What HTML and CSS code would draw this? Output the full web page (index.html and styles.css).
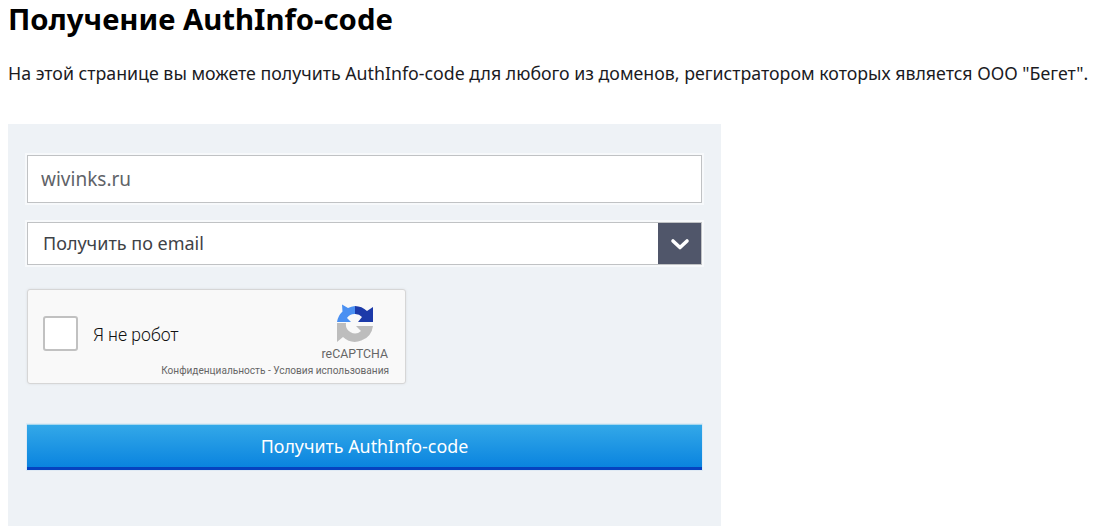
FILE: index.html
```html
<!DOCTYPE html>
<html lang="ru">
<head>
    <meta charset="UTF-8">
    <meta name="viewport" content="width=device-width, initial-scale=1.0">
    <title>Получение AuthInfo-code</title>
    <link rel="stylesheet" href="styles.css">
</head>
<body>

<h1>Получение AuthInfo-code</h1>
<p class="lead">На этой странице вы можете получить AuthInfo-code для любого из доменов, регистратором которых является ООО "Бегет".</p>

<form class="panel">
    <input class="field" type="text" value="wivinks.ru">

    <div class="select">
        <span class="select-text">Получить по email</span>
        <span class="select-arrow">
            <svg width="20" height="14" viewBox="0 0 20 14">
                <path d="M3 4 L10 10.5 L17 4" fill="none" stroke="#fff" stroke-width="3.6" stroke-linecap="round" stroke-linejoin="round"/>
            </svg>
        </span>
    </div>

    <!-- Капча -->
    <div class="captcha">
        <div class="captcha-main">
            <span class="captcha-box"></span>
            <span class="captcha-label">Я не робот</span>
        </div>
        <div class="captcha-brand">
            <svg width="38" height="39" viewBox="0 0 38 39">
                <path d="M1 18 A18 18 0 0 1 6.5 7.5 L6 0.5 L12 4 A18 18 0 0 1 19 2 L19 10 A9 9 0 0 0 11 14 L15 18 Z" fill="#4a90f2"/>
                <path d="M19 2 A18 18 0 0 1 31 7 L37 3 L37 18 L22 18 L26 13 A9 9 0 0 0 19 10 Z" fill="#1c3aa9"/>
                <path d="M1 19 L10 19 A9 9 0 0 0 25 27 L20 22 L37 22 A18 18 0 0 1 7 33 L1 38 Z" fill="#bdbdbd"/>
            </svg>
            <span class="captcha-name">reCAPTCHA</span>
        </div>
        <div class="captcha-links">Конфиденциальность - Условия использования</div>
    </div>

    <button class="submit" type="button">Получить AuthInfo-code</button>
</form>

</body>
</html>
```

FILE: styles.css
```css
body {
    font-family: "Noto Sans", Arial, sans-serif;
    margin: 0;
    padding: 0 8px;
    background-color: #fff;
    color: #1b1b1f;
}

h1 {
    margin: 0;
    font-size: 29.3px;
    line-height: 38px;
    font-weight: 700;
    color: #000;
}

.lead {
    margin: 22px 0 0;
    font-size: 17.75px;
    line-height: 26px;
    white-space: nowrap;
}

.panel {
    width: 713px;
    height: 402px;
    margin-top: 38px;
    padding: 31px 19px 0;
    box-sizing: border-box;
    background-color: #eef2f6;
}

.field {
    display: block;
    width: 100%;
    height: 48px;
    box-sizing: border-box;
    padding: 0 13px;
    border: 1px solid #c0c2c4;
    background-color: #fff;
    font-family: inherit;
    font-size: 19px;
    color: #5f6368;
    box-shadow: 0 0 0 2px #f7f9fb;
}

.select {
    display: flex;
    align-items: stretch;
    justify-content: space-between;
    height: 43px;
    box-sizing: border-box;
    margin-top: 19px;
    border: 1px solid #c0c2c4;
    background-color: #fff;
    box-shadow: 0 0 0 2px #f7f9fb;
}

.select-text {
    align-self: center;
    padding: 0 0 2px 15px;
    font-size: 18px;
    color: #3e4247;
}

.select-arrow {
    display: flex;
    align-items: center;
    justify-content: center;
    width: 43px;
    background-color: #50566a;
}

.captcha {
    position: relative;
    width: 379px;
    height: 95px;
    box-sizing: border-box;
    margin-top: 24px;
    border: 1px solid #d6d6d6;
    border-radius: 3px;
    background-color: #f9f9f9;
    box-shadow: 0 0 3px rgba(0, 0, 0, 0.08);
    font-family: Roboto, Arial, sans-serif;
}

.captcha-main {
    display: flex;
    align-items: center;
    gap: 15px;
    padding: 26px 0 0 15px;
}

.captcha-box {
    width: 35px;
    height: 35px;
    box-sizing: border-box;
    border: 2px solid #c1c1c1;
    border-radius: 3px;
    background-color: #fff;
}

.captcha-label {
    padding-top: 3px;
    font-size: 17.6px;
    font-weight: 300;
    color: #111;
}

.captcha-brand {
    position: absolute;
    top: 14px;
    right: 17px;
    display: flex;
    flex-direction: column;
    align-items: center;
}

.captcha-name {
    margin-top: 4px;
    font-size: 12.3px;
    color: #666;
}

.captcha-links {
    position: absolute;
    right: 16px;
    bottom: 7px;
    font-size: 10.1px;
    color: #666;
}

.submit {
    display: block;
    width: 100%;
    height: 46px;
    margin-top: 40px;
    padding: 0;
    border: none;
    border-top: 1px solid #a5d8ee;
    border-bottom: 3px solid #0643c0;
    background: linear-gradient(#33a8e8, #0a84df);
    box-shadow: 0 0 0 1px #dfeaf4;
    font-family: inherit;
    font-size: 17.85px;
    color: #fff;
}
```
